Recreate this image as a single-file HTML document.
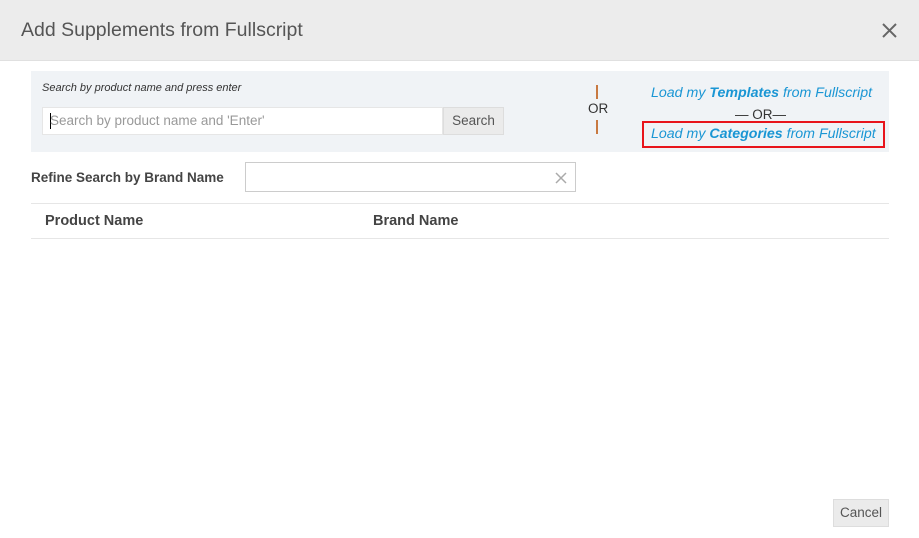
<!DOCTYPE html>
<html><head><meta charset="utf-8"><style>
*{margin:0;padding:0;box-sizing:border-box}
body{width:919px;height:538px;background:#fff;font-family:"Liberation Sans",sans-serif;position:relative;overflow:hidden;color:#333}
.a{position:absolute;white-space:nowrap}
</style></head><body>
<div class="a" style="left:0;top:0;width:919px;height:61px;background:#ececec;border-bottom:1px solid #e0e0e0"></div>
<div class="a" style="left:21px;top:19px;font-size:19.5px;color:#555">Add Supplements from Fullscript</div>
<svg class="a" style="left:882px;top:23px" width="15" height="15"><path d="M1 1L14 14M14 1L1 14" stroke="#666" stroke-width="2"/></svg>
<div class="a" style="left:31px;top:71px;width:858px;height:81px;background:#f0f3f6"></div>
<div class="a" style="left:42px;top:82px;font-size:11px;font-style:italic;color:#333">Search by product name and press enter</div>
<div class="a" style="left:42px;top:107px;width:401px;height:28px;background:#fff;border:1px solid #e6e6e6"></div>
<div class="a" style="left:50px;top:113px;width:1px;height:16px;background:#000"></div>
<div class="a" style="left:50px;top:113px;font-size:13.5px;color:#999">Search by product name and 'Enter'</div>
<div class="a" style="left:443px;top:107px;width:61px;height:28px;background:#ebebeb;border:1px solid #ddd;font-size:13.5px;color:#555;text-align:center;line-height:26px">Search</div>
<div class="a" style="left:596px;top:85px;width:2px;height:14px;background:#c87941"></div>
<div class="a" style="left:596px;top:120px;width:2px;height:14px;background:#c87941"></div>
<div class="a" style="left:588px;top:101px;font-size:13.5px;color:#333">OR</div>
<div class="a" style="left:651px;top:85px;font-size:14.2px;font-style:italic;color:#1a96d4">Load my <b>Templates</b> from Fullscript</div>
<div class="a" style="left:735px;top:107px;font-size:13.5px;color:#333">— OR—</div>
<div class="a" style="left:642px;top:121px;width:243px;height:27px;border:2px solid #e8141b"></div>
<div class="a" style="left:651px;top:126px;font-size:14.2px;font-style:italic;color:#1a96d4">Load my <b>Categories</b> from Fullscript</div>
<div class="a" style="left:31px;top:170px;font-size:13.5px;font-weight:bold;color:#444">Refine Search by Brand Name</div>
<div class="a" style="left:245px;top:162px;width:331px;height:30px;border:1px solid #ccc;background:#fff"></div>
<svg class="a" style="left:555px;top:172px" width="12" height="12"><path d="M1 1L11 11M11 1L1 11" stroke="#aaa" stroke-width="1.5"/></svg>
<div class="a" style="left:31px;top:203px;width:858px;height:1px;background:#e6e6e6"></div>
<div class="a" style="left:45px;top:213px;font-size:14.5px;font-weight:bold;color:#444">Product Name</div>
<div class="a" style="left:373px;top:213px;font-size:14.5px;font-weight:bold;color:#444">Brand Name</div>
<div class="a" style="left:31px;top:238px;width:858px;height:1px;background:#e6e6e6"></div>
<div class="a" style="left:833px;top:499px;width:56px;height:28px;background:#ebebeb;border:1px solid #ddd;font-size:13.5px;color:#555;text-align:center;line-height:26px">Cancel</div>
</body></html>
